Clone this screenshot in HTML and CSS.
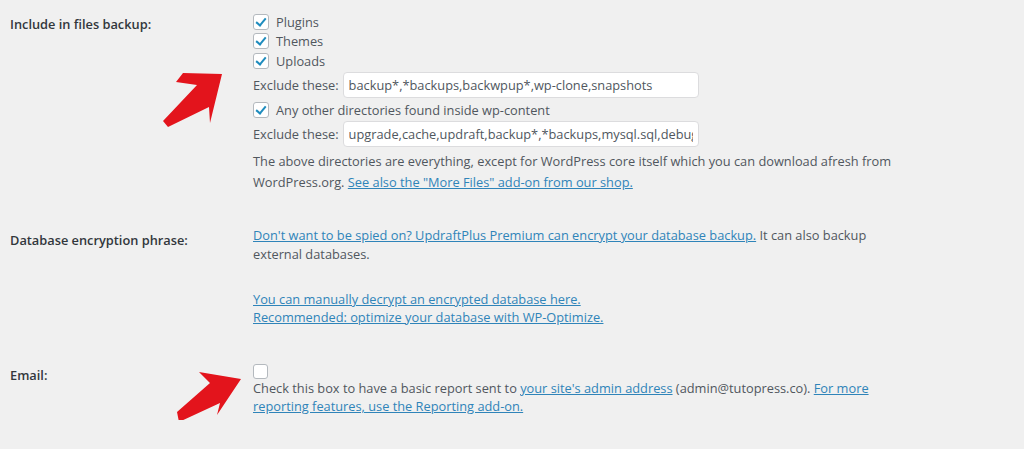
FILE: index.html
```html
<!DOCTYPE html>
<html lang="en">

<head>
    <meta charset="UTF-8">
    <meta name="viewport" content="width=device-width, initial-scale=1.0">
    <title>UpdraftPlus settings</title>
    <link rel="stylesheet" href="styles.css">
</head>

<body>
    <div class="settings">
        <!-- files backup -->
        <div class="row row-files">
            <div class="label">Include in files backup:</div>
            <div class="field">
                <label class="check"><span class="box checked"></span>Plugins</label>
                <label class="check"><span class="box checked"></span>Themes</label>
                <label class="check"><span class="box checked"></span>Uploads</label>
                <div class="exclude exclude-first">
                    <span>Exclude these:</span>
                    <input class="text" type="text" value="backup*,*backups,backwpup*,wp-clone,snapshots">
                </div>
                <label class="check check-other"><span class="box checked"></span>Any other directories found inside wp-content</label>
                <div class="exclude">
                    <span>Exclude these:</span>
                    <input class="text" type="text" value="upgrade,cache,updraft,backup*,*backups,mysql.sql,debug.log">
                </div>
                <p class="note">The above directories are everything, except for WordPress core itself which you can download afresh from WordPress.org. <a href="#">See also the "More Files" add-on from our shop.</a></p>
            </div>
        </div>

        <!-- encryption -->
        <div class="row row-db">
            <div class="label">Database encryption phrase:</div>
            <div class="field">
                <p class="tight"><a href="#">Don't want to be spied on? UpdraftPlus Premium can encrypt your database backup.</a> It can also backup external databases.</p>
                <p class="tight links">
                    <a href="#">You can manually decrypt an encrypted database here.</a><br>
                    <a href="#">Recommended: optimize your database with WP-Optimize.</a>
                </p>
            </div>
        </div>

        <!-- email -->
        <div class="row row-email">
            <div class="label">Email:</div>
            <div class="field">
                <span class="box"></span>
                <p class="tight">Check this box to have a basic report sent to <a href="#">your site's admin address</a> (admin@tutopress.co). <a href="#">For more reporting features, use the Reporting add-on.</a></p>
            </div>
        </div>
    </div>

    <!-- red arrows drawn over the screenshot -->
    <svg class="arrow arrow-top" width="80" height="70" viewBox="0 0 80 70">
        <polygon points="33,13 72,14 60,63 59,47 18,67 13,61 47,25 26,22" fill="#e3141c" />
    </svg>
    <svg class="arrow arrow-bottom" width="80" height="60" viewBox="0 0 80 60">
        <polygon points="29,12 71,19 47,55 50,43 9,62 7,52 40,23" fill="#e3141c" />
    </svg>
</body>

</html>
```

FILE: styles.css
```css
* {
    margin: 0;
    padding: 0;
    box-sizing: border-box;
}

body {
    background-color: #f0f0f0;
    color: #50575e;
    font-family: "Open Sans", "Noto Sans", sans-serif;
    font-size: 12.8px;
    position: relative;
    height: 449px;
    overflow: hidden;
}

a {
    color: #2f84b9;
    text-decoration: underline;
}

.row {
    display: grid;
    grid-template-columns: 253px 655px;
}

.label {
    padding-left: 10px;
    font-weight: 600;
    color: #32373c;
}

.row-files {
    padding-top: 12px;
}

.row-files .label {
    padding-top: 3px;
}

.check {
    display: flex;
    align-items: center;
    height: 19.5px;
}

.box {
    display: inline-block;
    width: 16px;
    height: 16px;
    background-color: #fff;
    border: 1px solid #b4b9be;
    border-radius: 3px;
    margin-right: 7px;
    position: relative;
    flex-shrink: 0;
}

.box.checked::after {
    content: "";
    position: absolute;
    left: 4px;
    top: 1px;
    width: 4px;
    height: 8px;
    border-right: 2.5px solid #1e8cbe;
    border-bottom: 2.5px solid #1e8cbe;
    transform: rotate(40deg);
}

.exclude {
    display: flex;
    align-items: center;
    gap: 4px;
    height: 26px;
}

.exclude-first {
    margin-top: 1.5px;
}

.check-other {
    margin-top: 2.5px;
    margin-bottom: 0.5px;
}

.text {
    width: 356px;
    height: 26px;
    border: 1px solid #dcdcde;
    border-radius: 4px;
    background-color: #fff;
    font-family: inherit;
    font-size: 12.8px;
    color: #50575e;
    padding: 0 5px;
    outline: none;
}

.note {
    margin-top: 4.5px;
    line-height: 21px;
}

.row-db {
    margin-top: 33px;
}

.row-db .label {
    padding-top: 5px;
}

.tight {
    line-height: 19px;
}

.links {
    margin-top: 26px;
    line-height: 18px;
}

.row-email {
    margin-top: 38px;
}

.row-email .label {
    padding-top: 2px;
}

.row-email .box {
    display: block;
    width: 15px;
    height: 15px;
}

.row-email .tight {
    line-height: 18px;
}

.arrow {
    position: absolute;
}

.arrow-top {
    left: 150px;
    top: 60px;
}

.arrow-bottom {
    left: 170px;
    top: 360px;
}
```
